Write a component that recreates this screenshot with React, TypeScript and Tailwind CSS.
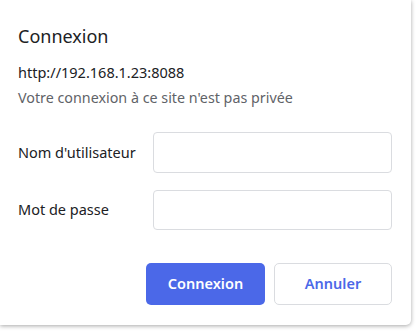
export default function App() {
  return (
    <div className="w-[417px] h-[331px] bg-white overflow-hidden" style={{ fontFamily: '"Noto Sans", "Open Sans", sans-serif' }}>
      <div className="w-[411px] h-[325px] bg-white rounded-br-[5px] shadow-[0_1px_4px_rgba(0,0,0,0.35)] pl-[18px] pr-[19px] pt-[23px]">
        <h1 className="text-[18px] leading-[26px] text-[#202124]">Connexion</h1>
        <div className="mt-[13px] text-[14.5px] leading-[20px] text-[#202124]">http://192.168.1.23:8088</div>
        <div className="mt-[6px] text-[14.3px] leading-[20px] text-[#5f6368]">Votre connexion à ce site n'est pas privée</div>
        <div className="mt-[24px] flex flex-col gap-[17px]">
          <div className="flex items-center justify-between">
            <label className="text-[14.5px] text-[#202124]">Nom d'utilisateur</label>
            <input className="w-[239px] h-[41px] border border-[#dadce0] rounded-[4px] outline-none" />
          </div>
          <div className="flex items-center justify-between">
            <label className="text-[14.5px] text-[#202124]">Mot de passe</label>
            <input type="password" className="w-[239px] h-[40px] border border-[#dadce0] rounded-[4px] outline-none" />
          </div>
        </div>
        <div className="mt-[33px] flex justify-end gap-[9px]">
          <button className="w-[119px] h-[42px] rounded-[5px] bg-[#4b68e8] text-white text-[14.5px] font-semibold">Connexion</button>
          <button className="w-[118px] h-[42px] rounded-[5px] border border-[#dadce0] bg-white text-[#4b68e8] text-[14.5px] font-semibold">Annuler</button>
        </div>
      </div>
    </div>
  );
}
